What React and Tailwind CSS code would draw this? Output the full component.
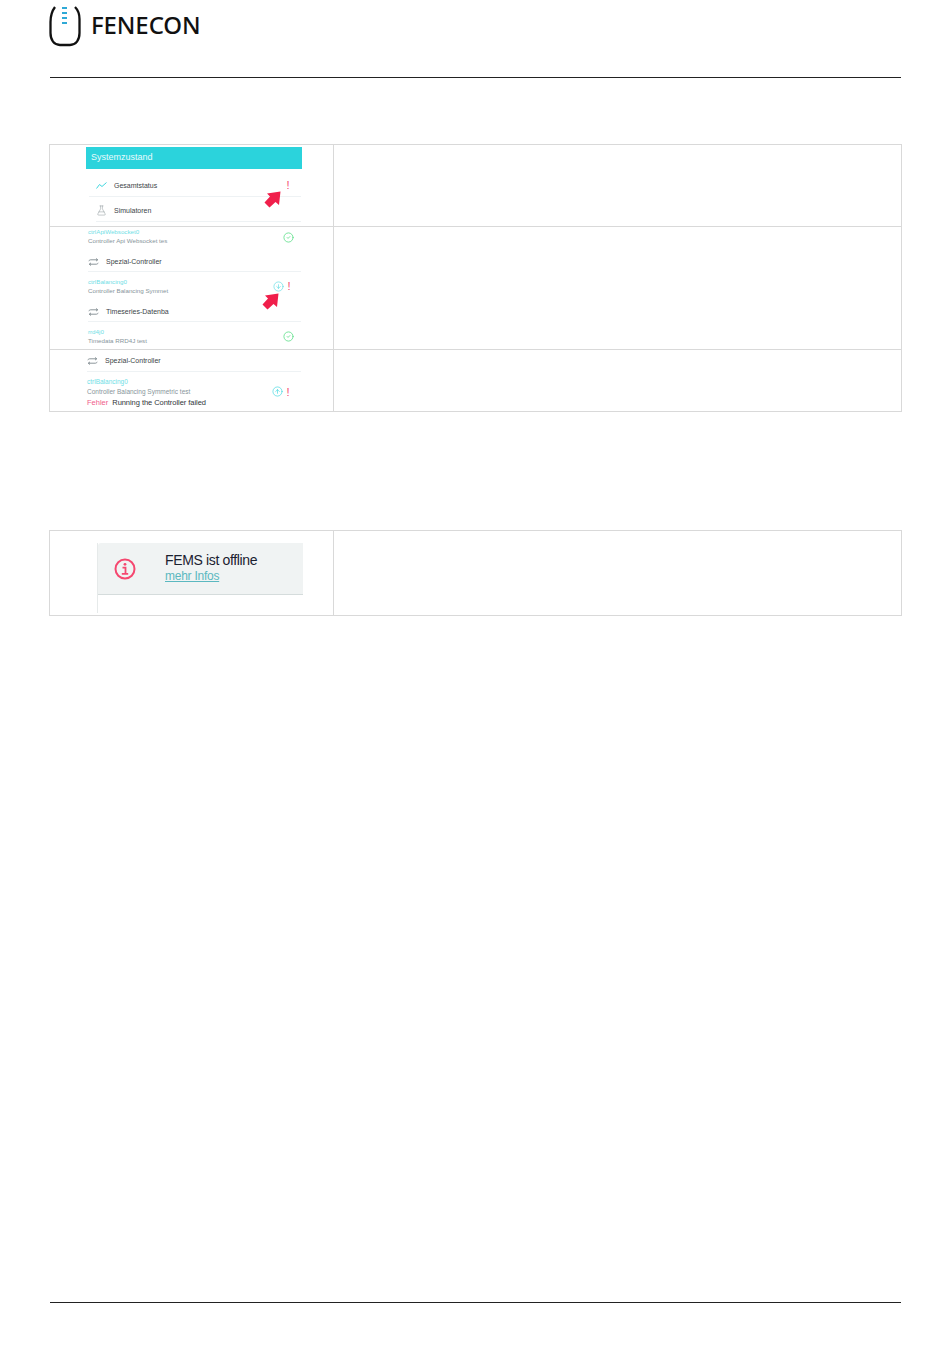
import { CircleCheck, CircleArrowDown, CircleArrowUp, FlaskConical } from 'lucide-react';

const Bang = () => (
  <span className="w-[10px] text-center text-[11px] leading-[10px] text-[#f5476f]">!</span>
);

// red pointer arrow laid over the screenshots
const RedArrow = ({ className }) => (
  <svg className={`absolute ${className}`} width="17" height="17" viewBox="0 0 17 17">
    <polygon points="16.5,0.5 15,14 11.500,11 5.500,16.500 0.500,11.500 6,5.500 3,2.500" fill="#f01f4b" />
  </svg>
);

const Section = ({ icon, label, className = '' }) => (
  <div className={`flex h-[20px] items-center border-b border-[#eef2f4] text-[7px] leading-none text-[#3c4448] ${className}`}>
    {icon}
    <span>{label}</span>
  </div>
);

const SwapIcon = () => (
  <svg className="mr-[7px]" width="11" height="8" viewBox="0 0 11 8">
    <path d="M0.800 3.200C1.300 2 2 1.800 3 1.800H9.500M8 0.500L9.800 1.800L8 3.100M10.200 4.800C9.700 6 9 6.200 8 6.200H1.500M3 4.900L1.200 6.200L3 7.500" fill="none" stroke="#7f8a8e" strokeWidth="0.9" />
  </svg>
);

const Component = ({ name, desc, status, className = 'h-[30px] pt-[5px]', iconClass = 'mt-[4px]' }) => (
  <div className={`flex items-start pr-[7px] ${className}`}>
    <div className="flex flex-col text-[6.2px] leading-[9px]">
      <span className="text-[#6fe0e6]">{name}</span>
      <span className="text-[#87959b]">{desc}</span>
    </div>
    <div className={`ml-auto flex h-[10px] items-center ${iconClass}`}>{status}</div>
  </div>
);

const Ok = () => <CircleCheck size={11} strokeWidth={1.8} className="text-[#5fe08a]" />;

export default function App() {
  return (
    <div className="flex h-[1358px] w-[950px] flex-col bg-white px-[49px] font-['Liberation_Sans',Arial,sans-serif]">
      <header className="ml-[1px] flex h-[78px] shrink-0 items-start border-b border-[#222]">
        <svg className="mt-[6px] -ml-[1px]" width="33" height="41" viewBox="0 0 33 41">
          <path d="M6 1C3 5 1.500 10 1.500 16V27C1.500 34 5 39 11 39H21C27 39 30.500 34 30.500 27V13C30.500 8 29 4 26 1" fill="none" stroke="#111" strokeWidth="2.300" />
          <path d="M13 2h5M13 7h5M13 12h5M13 17h5" stroke="#2fa9d6" strokeWidth="2.200" fill="none" />
        </svg>
        <span className="mt-[10px] ml-[9px] font-['Noto_Sans',sans-serif] text-[24px] leading-[30px] font-medium tracking-[-0.1px] text-[#111]">FENECON</span>
      </header>

      <div className="mt-[66px] -mr-[1px] grid shrink-0 grid-cols-[284px_1fr] border-t border-l border-[#d9d9d9]">
        {/* Systemzustand */}
        <div className="relative h-[82px] border-r border-b border-[#d9d9d9] pt-[2px] pl-[36px]">
          <div className="flex h-[22px] w-[216px] items-center bg-[#2bd3dc] pl-[5px] text-[9px] text-[#e8fbfc]">Systemzustand</div>
          <div className="w-[215px]">
            <Section
              className="ml-[3px] h-[28px] pt-[5px]"
              icon={
                <svg className="mr-[7px] ml-[7px]" width="11" height="7" viewBox="0 0 11 7">
                  <polyline points="0.5,6.500 3.500,2.500 6,4.500 10.500,0.500" fill="none" stroke="#3fd6de" strokeWidth="1" />
                </svg>
              }
              label="Gesamtstatus"
            />
            <Section
              className="ml-[10px] h-[25px] pt-[3px]"
              icon={<FlaskConical size={11} strokeWidth={1} className="mr-[7px] text-[#7f8a8e]" />}
              label="Simulatoren"
            />
          </div>
          <span className="absolute top-[35px] left-[233px] flex h-[10px]"><Bang /></span>
          <RedArrow className="top-[46px] left-[214px]" />
        </div>
        <div className="border-r border-b border-[#d9d9d9]" />

        {/* Controller list */}
        <div className="relative h-[123px] border-r border-b border-[#d9d9d9] pl-[38px]">
          <div className="w-[213px]">
            <Component name="ctrlApiWebsocket0" desc="Controller Api Websocket tes" status={<Ok />} className="h-[25px]" iconClass="mt-[5px]" />
            <Section icon={<SwapIcon />} label="Spezial-Controller" className="pl-0" />
            <Component
              name="ctrlBalancing0"
              desc="Controller Balancing Symmet"
              status={<><CircleArrowDown size={11} strokeWidth={1.3} className="text-[#4fd8e0]" /><Bang /></>}
            />
            <Section icon={<SwapIcon />} label="Timeseries-Datenba" />
            <Component name="rrd4j0" desc="Timedata RRD4J test" status={<Ok />} />
          </div>
          <RedArrow className="top-[66px] left-[212px]" />
        </div>
        <div className="border-r border-b border-[#d9d9d9]" />

        {/* Error detail */}
        <div className="h-[62px] border-r border-b border-[#d9d9d9] pl-[37px]">
          <div className="w-[214px]">
            <Section icon={<SwapIcon />} label="Spezial-Controller" className="h-[22px]" />
            <div className="flex items-center pt-[4px] pr-[8px]">
              <div className="flex flex-col text-[6.5px] leading-[10px]">
                <span className="text-[#6fe0e6]">ctrlBalancing0</span>
                <span className="text-[#87959b]">Controller Balancing Symmetric test</span>
              </div>
              <div className="mt-[10px] ml-auto flex items-center">
                <CircleArrowUp size={11} strokeWidth={1.3} className="text-[#2bd3dc]" />
                <Bang />
              </div>
            </div>
            <div className="mt-[1px] flex gap-[4px] text-[7.5px] leading-[10px]">
              <span className="text-[#f0608c]">Fehler</span>
              <span className="tracking-[-0.05px] text-[#30363a]">Running the Controller failed</span>
            </div>
          </div>
        </div>
        <div className="border-r border-b border-[#d9d9d9]" />
      </div>

      <div className="mt-[118px] -mr-[1px] grid shrink-0 grid-cols-[284px_1fr] border-t border-l border-[#d9d9d9]">
        <div className="h-[85px] border-r border-b border-[#d9d9d9] pt-[12px] pl-[47px]">
          <div className="h-[70px] w-[206px] border-l border-[#e6eaea]">
            <div className="flex h-[52px] items-center rounded-tl-[3px] border-b border-[#d5dcdc] bg-[#f0f3f3]">
              <svg className="ml-[16px]" width="22" height="22" viewBox="0 0 22 22">
                <circle cx="11" cy="11" r="9.500" fill="none" stroke="#f5476f" strokeWidth="2" />
                <path d="M8.500 9.700h3v6M7.800 15.800h6.400" fill="none" stroke="#f5476f" strokeWidth="1.800" />
                <circle cx="11" cy="6.300" r="1.400" fill="#f5476f" />
              </svg>
              <div className="ml-[29px] flex flex-col">
                <span className="text-[14px] leading-[15px] tracking-[-0.35px] text-[#1b2130]">FEMS ist offline</span>
                <span className="text-[12px] leading-[16px] tracking-[-0.25px] text-[#5bb8c0] underline">mehr Infos</span>
              </div>
            </div>
          </div>
        </div>
        <div className="border-r border-b border-[#d9d9d9]" />
      </div>

      <div className="mt-[686px] ml-[1px] border-t border-[#222]" />
    </div>
  );
}
